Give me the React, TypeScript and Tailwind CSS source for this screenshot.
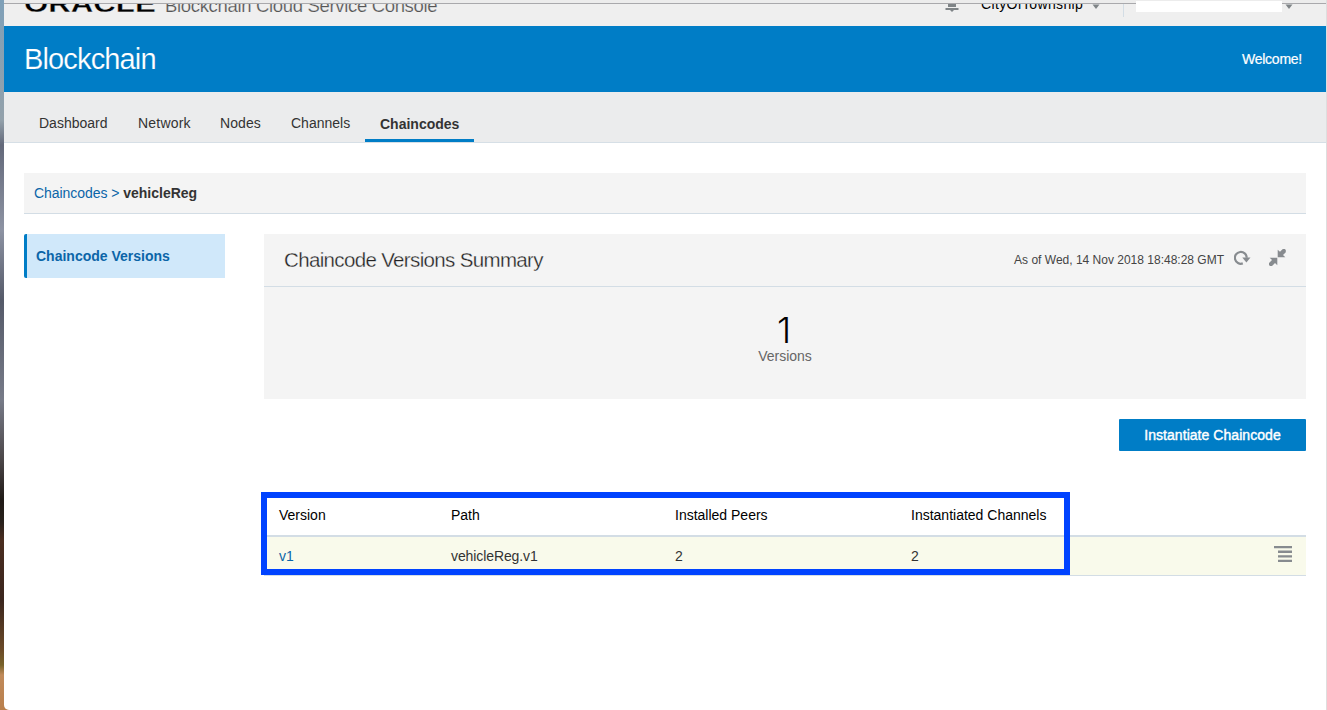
import React from 'react';

const tabs = [
  { label: 'Dashboard', box: 'w-[99px]', text: '' },
  { label: 'Network', box: 'w-[82px]', text: 'tracking-[0.2px]' },
  { label: 'Nodes', box: 'w-[71px]', text: 'tracking-[0.1px]' },
  { label: 'Channels', box: 'w-[89px]', text: '' },
];

function Caret() {
  return (
    <svg width="8" height="6" viewBox="0 0 8 6" className="block">
      <path d="M0.5 0.5h7L4 5z" fill="#7f8487" />
    </svg>
  );
}

function TopBar() {
  return (
    <header className="flex h-[26px] flex-col bg-[#efefef]">
      <div className="h-1 shrink-0 border-b border-[#a9a9ac] bg-[#ececec]" />
      <div className="flex h-[22px] items-start overflow-hidden">
        <div className="-mt-[12px] ml-5 w-[141px]">
          <span className="block w-[101px] origin-left scale-x-[1.3] whitespace-nowrap text-[24px] leading-[24px] font-bold text-black [-webkit-text-stroke:0.3px_#efefef]">
            ORACLE
          </span>
        </div>
        <span className="-mt-[10px] w-[280px] whitespace-nowrap text-[18.5px] leading-[24px] tracking-[-0.33px] text-[#555] [-webkit-text-stroke:0.2px_#efefef]">
          Blockchain Cloud Service Console
        </span>
        <svg width="14" height="16" viewBox="0 0 14 16" className="-mt-[8px] ml-[500px] shrink-0" fill="#7f8487">
          <path d="M3 4a4 4 0 0 1 8 0v7H3zM0.5 12h13v2h-13zM5 14h4l-2 2z" />
        </svg>
        <span className="-mt-[9px] ml-[22px] w-[103px] whitespace-nowrap text-[14px] leading-[18px] tracking-[0.35px] text-black">
          CityOfTownship
        </span>
        <div className="ml-[8px]"><Caret /></div>
        <div className="ml-[23px] h-[13px] w-px bg-[#d3dde5]" />
      </div>
    </header>
  );
}

function Navigation() {
  return (
    <nav className="flex h-[51px] items-end border-b border-[#d6dfe6] bg-[#ebeced] pl-5 text-[14px] text-[#333]">
      {tabs.map((t) => (
        <a key={t.label} className={`flex h-[38px] items-center pt-px pl-[15px] ${t.box} ${t.text}`}>
          {t.label}
        </a>
      ))}
      <a className="flex h-[38px] w-[109px] items-center border-b-[3px] border-[#007dc6] pl-[15px] pt-[5px] font-bold">
        Chaincodes
      </a>
    </nav>
  );
}

function Summary() {
  return (
    <section className="h-[165px] bg-[#f4f4f4]">
      <div className="flex h-[53px] items-center border-b border-[#d3dde5] pl-5">
        <h2 className="text-[20.5px] tracking-[-0.65px] text-[#222] [-webkit-text-stroke:0.3px_#f4f4f4]">
          Chaincode Versions Summary
        </h2>
        <span className="mr-[10px] ml-auto text-[12px] whitespace-nowrap text-[#444]">
          As of Wed, 14 Nov 2018 18:48:28 GMT
        </span>
        <svg width="17" height="16" viewBox="0 0 17 16" className="-mt-1">
          <path d="M8.8 13.4A5.9 5.9 0 1 1 12.7 7.8" fill="none" stroke="#878b8f" strokeWidth="2.2" />
          <path d="M8.3 7.5h8.2l-4.1 5z" fill="#878b8f" />
        </svg>
        <svg width="17" height="17" viewBox="0 0 17 17" className="mr-5 ml-[18px] -mt-[5px]" fill="#878b8f">
          <path d="M8.7.7v7.6h7.6L14 6l2.8-2.8V1L15.8 0h-2L11 2.8zM8.3 8.7H.7L3 11 0 14v2l1 1h2l3-3 2.3 2.3z" />
        </svg>
      </div>
      <div className="flex flex-col items-center pt-[25px]">
        <span className="mr-[2px] font-['Inter',sans-serif] text-[36px] leading-[36px] font-light text-black">1</span>
        <span className="text-[14px] leading-[16px] text-[#666]">Versions</span>
      </div>
    </section>
  );
}

function VersionsTable() {
  const columns = 'grid grid-cols-[172px_224px_236px_1fr] items-center pl-[15px] text-[14px]';
  return (
    <div className="relative mt-[44px]">
      <div className={`${columns} h-[42px] border-b-2 border-[#d3dde5] text-black`}>
        <span>Version</span>
        <span>Path</span>
        <span>Installed Peers</span>
        <span>Instantiated Channels</span>
      </div>
      <div className={`${columns} h-[39px] border-b border-[#d3dde5] bg-[#f9faeb] text-[#333]`}>
        <a className="text-[#0b65a8]">v1</a>
        <span className="tracking-[-0.1px]">vehicleReg.v1</span>
        <span>2</span>
        <div className="flex items-center justify-between pr-[14px]">
          <span>2</span>
          <svg width="18" height="16" viewBox="0 0 18 16" fill="#878b8f" className="-mt-[4px]">
            <path d="M0 0h18v2.3H0zM4 4.6h14v2.3H4zM4 9.2h14v2.3H4zM4 13.7h14V16H4z" />
          </svg>
        </div>
      </div>
      <div className="absolute -top-[3px] -left-[3px] h-[83px] w-[809px] border-[6px] border-[#0043ff]" />
    </div>
  );
}

export default function App() {
  return (
    <div className="relative flex h-[710px] w-[1327px] overflow-hidden bg-[linear-gradient(#7fa0b8_0px,#93a1ab_120px,#63697a_145px,#8d93a3_230px,#555a69_300px,#777b88_400px,#4b4648_460px,#201a17_500px,#28211c_522px,#4a2d20_540px,#3b261e_600px,#6b4a28_650px,#77622a_665px,#c08a5a_675px,#b97f4c_710px)] font-['Liberation_Sans',Arial,sans-serif]">
      <div className="ml-1 flex flex-1 flex-col rounded-bl-[5px] border-r border-[#dedede] bg-white">
        <TopBar />
        <div className="flex h-[66px] items-center justify-between bg-[#007dc6] pr-6 pl-5 text-white">
          <h1 className="pt-px text-[29px] tracking-[-0.85px] [-webkit-text-stroke:0.2px_#007dc6]">Blockchain</h1>
          <span className="text-[14px] tracking-[-0.25px] [-webkit-text-stroke:0.2px_white]">Welcome!</span>
        </div>
        <Navigation />
        <div className="mt-[30px] mr-5 ml-5 flex h-[41px] items-center border-b border-[#d3dde5] bg-[#f4f4f4] pl-[10px] text-[14px] whitespace-pre text-[#0b65a8]">
          <span className="tracking-[-0.05px]">{'Chaincodes > '}</span>
          <b className="text-[#333]">vehicleReg</b>
        </div>
        <main className="mt-5 mr-5 ml-5 flex">
          <aside className="mr-[39px] flex h-[44px] w-[201px] items-center rounded-l-[2px] border-l-[3px] border-[#007dc6] bg-[#d0e8fa] pl-[9px] text-[14px] font-bold text-[#0b65a8]">
            Chaincode Versions
          </aside>
          <div className="flex flex-1 flex-col">
            <Summary />
            <button className="mt-5 h-[32px] w-[187px] self-end rounded-[1px] bg-[#007dc6] text-[14px] tracking-[0.05px] text-white [-webkit-text-stroke:0.4px_white]">
              Instantiate Chaincode
            </button>
            <VersionsTable />
          </div>
        </main>
      </div>
      <div className="absolute top-px left-[1136px] h-[11px] w-[146px] bg-white" />
      <div className="absolute top-1 left-[1285px]"><Caret /></div>
    </div>
  );
}
